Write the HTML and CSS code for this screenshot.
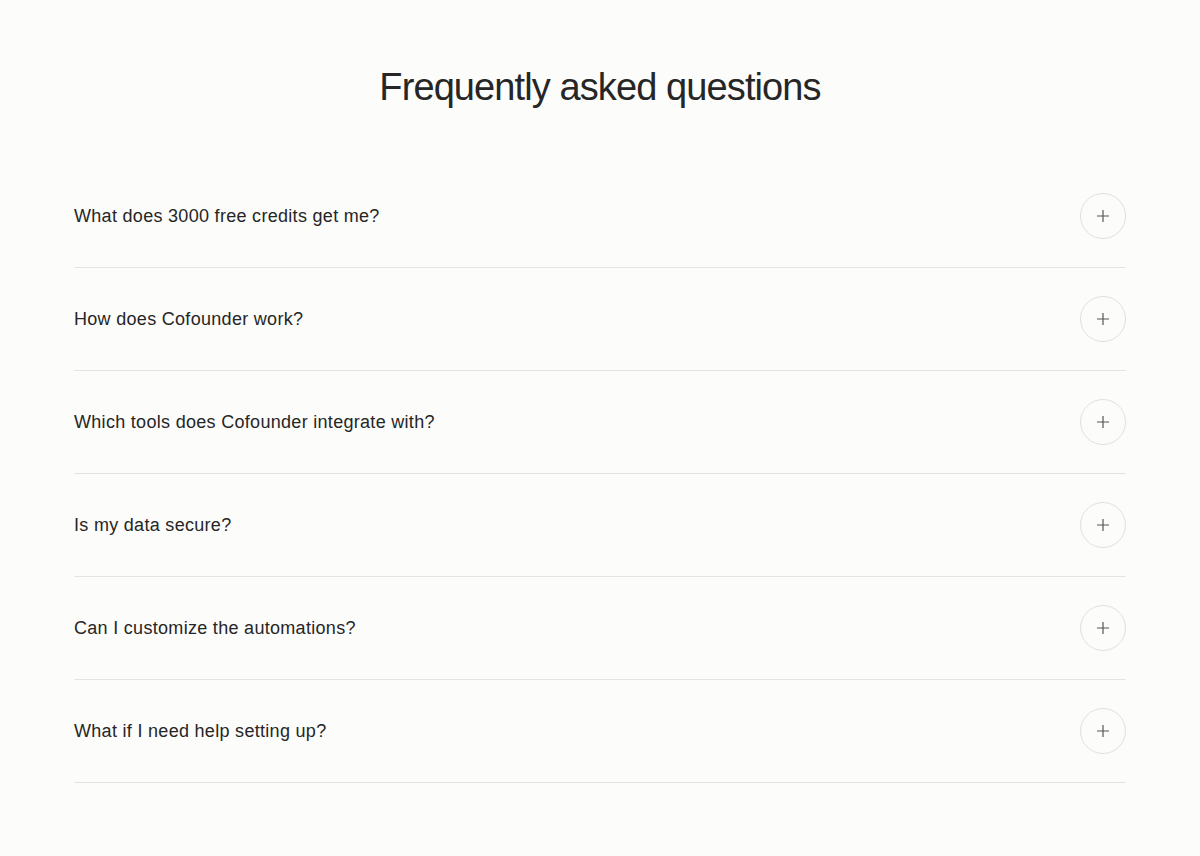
FILE: index.html
```
<!DOCTYPE html>
<html lang="en">
<head>
<meta charset="utf-8">
<title>FAQ</title>
<link rel="stylesheet" href="styles.css">
</head>
<body>
<section class="faq">
  <h1 class="faq-title">Frequently asked questions</h1>
  <ul class="faq-list">
    <li class="faq-item"><span class="faq-q">What does 3000 free credits get me?</span><span class="faq-btn"><svg viewBox="0 0 14 14" width="14" height="14"><path d="M7 1v12M1 7h12" stroke="#555" stroke-width="1.2" fill="none"/></svg></span></li>
    <li class="faq-item"><span class="faq-q">How does Cofounder work?</span><span class="faq-btn"><svg viewBox="0 0 14 14" width="14" height="14"><path d="M7 1v12M1 7h12" stroke="#555" stroke-width="1.2" fill="none"/></svg></span></li>
    <li class="faq-item"><span class="faq-q">Which tools does Cofounder integrate with?</span><span class="faq-btn"><svg viewBox="0 0 14 14" width="14" height="14"><path d="M7 1v12M1 7h12" stroke="#555" stroke-width="1.2" fill="none"/></svg></span></li>
    <li class="faq-item"><span class="faq-q">Is my data secure?</span><span class="faq-btn"><svg viewBox="0 0 14 14" width="14" height="14"><path d="M7 1v12M1 7h12" stroke="#555" stroke-width="1.2" fill="none"/></svg></span></li>
    <li class="faq-item"><span class="faq-q">Can I customize the automations?</span><span class="faq-btn"><svg viewBox="0 0 14 14" width="14" height="14"><path d="M7 1v12M1 7h12" stroke="#555" stroke-width="1.2" fill="none"/></svg></span></li>
    <li class="faq-item"><span class="faq-q">What if I need help setting up?</span><span class="faq-btn"><svg viewBox="0 0 14 14" width="14" height="14"><path d="M7 1v12M1 7h12" stroke="#555" stroke-width="1.2" fill="none"/></svg></span></li>
  </ul>
</section>
</body>
</html>
```
FILE: styles.css
```
* { box-sizing: border-box; }
html, body { margin: 0; padding: 0; }
body {
  background: #fcfcfb;
  font-family: "Liberation Sans", Arial, sans-serif;
  color: #262626;
}
.faq {
  width: 1052px;
  margin: 0 auto;
  padding-top: 63px;
}
.faq-title {
  margin: 0;
  text-align: center;
  font-size: 38px;
  font-weight: 400;
  line-height: 48px;
  letter-spacing: -0.9px;
}
.faq-list {
  list-style: none;
  margin: 54px 0 0;
  padding: 0;
}
.faq-item {
  display: flex;
  align-items: center;
  justify-content: space-between;
  padding: 28px 0;
  border-bottom: 1px solid #e4e4e2;
}
.faq-q {
  font-size: 18px;
  line-height: 24px;
  letter-spacing: 0.3px;
}
.faq-btn {
  width: 46px;
  height: 46px;
  border: 1px solid #e0e0de;
  border-radius: 50%;
  display: flex;
  align-items: center;
  justify-content: center;
}
```
